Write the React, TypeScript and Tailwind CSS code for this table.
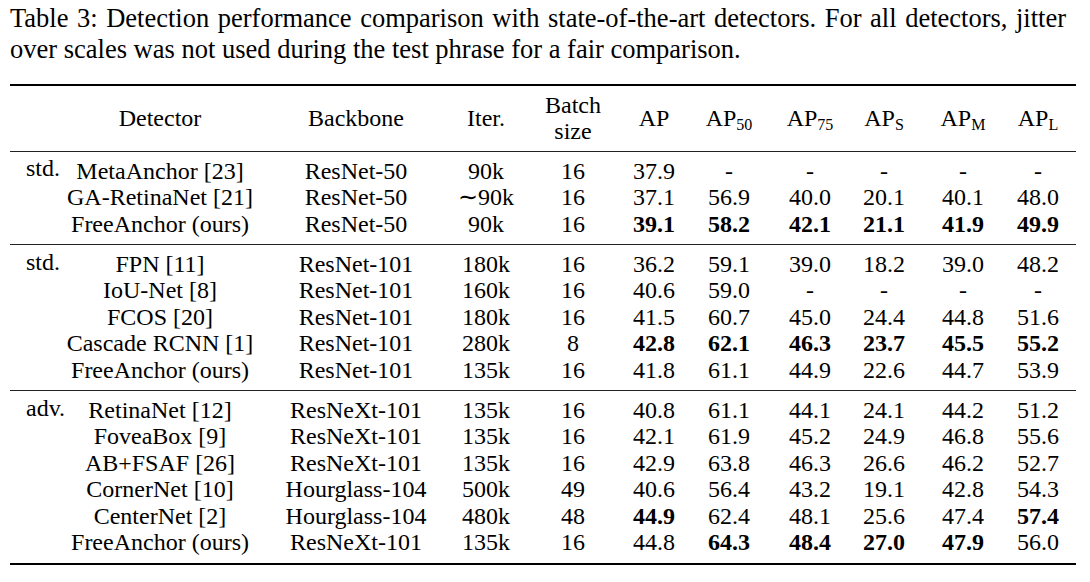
import type { ReactNode } from "react";

type Row = { cells: string[]; bold?: number[] };
type Group = { label: string; rows: Row[] };

const cols =
  "grid grid-cols-[52px_196px_196px_64px_110px_52px_98px_64px_84px_74px_76px] items-center text-center";

const all = [4, 5, 6, 7, 8, 9];

const groups: Group[] = [
  {
    label: "std.",
    rows: [
      { cells: ["MetaAnchor [23]", "ResNet-50", "90k", "16", "37.9", "-", "-", "-", "-", "-"] },
      { cells: ["GA-RetinaNet [21]", "ResNet-50", "\u223C90k", "16", "37.1", "56.9", "40.0", "20.1", "40.1", "48.0"] },
      { cells: ["FreeAnchor (ours)", "ResNet-50", "90k", "16", "39.1", "58.2", "42.1", "21.1", "41.9", "49.9"], bold: all },
    ],
  },
  {
    label: "std.",
    rows: [
      { cells: ["FPN [11]", "ResNet-101", "180k", "16", "36.2", "59.1", "39.0", "18.2", "39.0", "48.2"] },
      { cells: ["IoU-Net [8]", "ResNet-101", "160k", "16", "40.6", "59.0", "-", "-", "-", "-"] },
      { cells: ["FCOS [20]", "ResNet-101", "180k", "16", "41.5", "60.7", "45.0", "24.4", "44.8", "51.6"] },
      { cells: ["Cascade RCNN [1]", "ResNet-101", "280k", "8", "42.8", "62.1", "46.3", "23.7", "45.5", "55.2"], bold: all },
      { cells: ["FreeAnchor (ours)", "ResNet-101", "135k", "16", "41.8", "61.1", "44.9", "22.6", "44.7", "53.9"] },
    ],
  },
  {
    label: "adv.",
    rows: [
      { cells: ["RetinaNet [12]", "ResNeXt-101", "135k", "16", "40.8", "61.1", "44.1", "24.1", "44.2", "51.2"] },
      { cells: ["FoveaBox [9]", "ResNeXt-101", "135k", "16", "42.1", "61.9", "45.2", "24.9", "46.8", "55.6"] },
      { cells: ["AB+FSAF [26]", "ResNeXt-101", "135k", "16", "42.9", "63.8", "46.3", "26.6", "46.2", "52.7"] },
      { cells: ["CornerNet [10]", "Hourglass-104", "500k", "49", "40.6", "56.4", "43.2", "19.1", "42.8", "54.3"] },
      { cells: ["CenterNet [2]", "Hourglass-104", "480k", "48", "44.9", "62.4", "48.1", "25.6", "47.4", "57.4"], bold: [4, 9] },
      { cells: ["FreeAnchor (ours)", "ResNeXt-101", "135k", "16", "44.8", "64.3", "48.4", "27.0", "47.9", "56.0"], bold: [5, 6, 7, 8] },
    ],
  },
];

function Ap({ sub }: { sub?: string }) {
  return (
    <span>
      AP{sub && <sub className="text-[16px]">{sub}</sub>}
    </span>
  );
}

const header: ReactNode[] = [
  "Detector",
  "Backbone",
  "Iter.",
  <>
    Batch
    <br />
    size
  </>,
  <Ap />,
  <Ap sub="50" />,
  <Ap sub="75" />,
  <Ap sub="S" />,
  <Ap sub="M" />,
  <Ap sub="L" />,
];

export default function App() {
  return (
    <div className="min-h-screen w-[1090px] bg-white text-black font-[family-name:Liberation_Serif,serif]">
      <div className="w-[1056px] pl-[10px] pt-[3px] text-[26.5px] leading-[31px] box-content">
        <div className="text-justify [text-align-last:justify] whitespace-nowrap">
          Table 3: Detection performance comparison with state-of-the-art detectors. For all detectors, jitter
        </div>
        <div>over scales was not used during the test phrase for a fair comparison.</div>
      </div>

      <div className="ml-[10px] mt-[19px] w-[1066px] text-[24px] leading-[26.4px]">
        <div className="h-[2px] bg-black" />
        <div className={`${cols} py-[6px]`}>
          <div />
          {header.map((h, i) => (
            <div key={i}>{h}</div>
          ))}
        </div>
        {groups.map((g, gi) => (
          <div key={gi}>
            <div className="h-px bg-[#222]" />
            <div className="pt-[6px] pb-[7px]">
              {g.rows.map((r, ri) => (
                <div key={ri} className={cols}>
                  <div className="pl-[16px] text-left">
                    {ri === 0 && <div className="-mt-[5px]">{g.label}</div>}
                  </div>
                  {r.cells.map((c, ci) => (
                    <div key={ci} className={r.bold?.includes(ci) ? "font-bold" : ""}>
                      {c}
                    </div>
                  ))}
                </div>
              ))}
            </div>
          </div>
        ))}
        <div className="h-[2px] bg-black" />
      </div>
    </div>
  );
}
